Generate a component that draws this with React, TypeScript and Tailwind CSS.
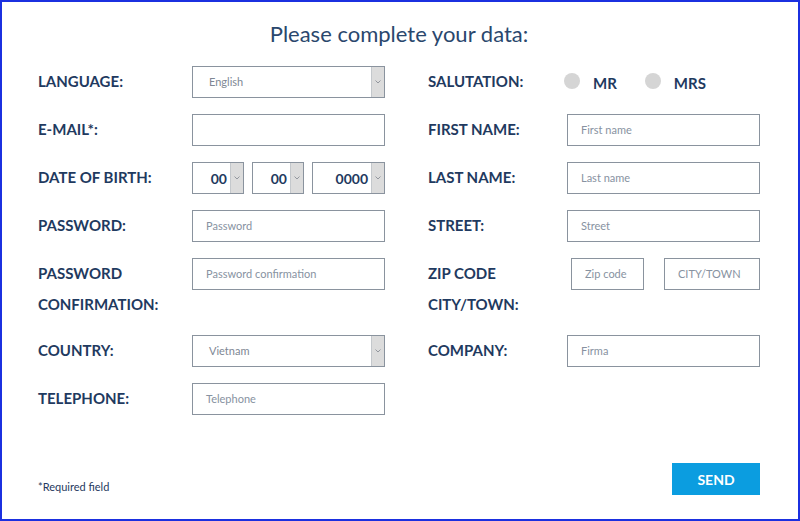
import React from 'react';

const navy = 'text-[#1f3a60]';

function Chevron() {
  return (
    <div className="flex h-full w-[13px] shrink-0 items-center justify-center bg-[#dcdcdc] border-l border-[#c4c8cc]">
      <svg width="6" height="4" viewBox="0 0 6 4" fill="none">
        <path d="M0.5 0.5 L3 3 L5.5 0.5" stroke="#8a8f96" strokeWidth="0.9" />
      </svg>
    </div>
  );
}

function Select({ value, bold, className = '' }: { value: string; bold?: boolean; className?: string }) {
  return (
    <div className={`flex h-8 items-stretch border border-[#8a939e] bg-white ${className}`}>
      {bold ? (
        <div className={`flex flex-1 items-center justify-end pr-[3px] text-[14px] font-bold ${navy}`}>{value}</div>
      ) : (
        <div className="flex flex-1 items-center pl-4 text-[11px] text-[#7e8794]">{value}</div>
      )}
      <Chevron />
    </div>
  );
}

function Input({ placeholder, className = 'w-[193px]' }: { placeholder?: string; className?: string }) {
  return (
    <div className={`flex h-8 items-center border border-[#8a939e] bg-white pl-[13px] text-[11px] text-[#8792a1] ${className}`}>
      {placeholder}
    </div>
  );
}

function Row({ label, labelW, children }: { label: React.ReactNode; labelW: string; children: React.ReactNode }) {
  return (
    <div className="flex items-start">
      <div className={`${labelW} shrink-0 text-[15px] font-bold leading-[31px] ${navy}`}>{label}</div>
      {children}
    </div>
  );
}

export default function App() {
  return (
    <div
      className="box-border flex h-[521px] w-[800px] flex-col border-2 border-[#1b30e0] bg-white pl-[36px] pr-[38px] pt-[18px]"
      style={{ fontFamily: '"Lato", "Open Sans", sans-serif' }}
    >
      <h1 className="text-center text-[22px] leading-7 font-normal text-[#2a476d]">Please complete your data:</h1>

      <div className="mt-[18px] flex gap-[43px]">
        {/* left column */}
        <div className="flex flex-col gap-4">
          <Row label="LANGUAGE:" labelW="w-[154px]">
            <Select value="English" className="w-[193px]" />
          </Row>
          <Row label="E-MAIL*:" labelW="w-[154px]">
            <Input />
          </Row>
          <Row label="DATE OF BIRTH:" labelW="w-[154px]">
            <div className="flex w-[193px] gap-2">
              <Select value="00" bold className="w-[52px]" />
              <Select value="00" bold className="w-[52px]" />
              <Select value="0000" bold className="w-[73px]" />
            </div>
          </Row>
          <Row label="PASSWORD:" labelW="w-[154px]">
            <Input placeholder="Password" />
          </Row>
          <Row
            label={
              <div className="-mb-px">
                PASSWORD
                <br />
                CONFIRMATION:
              </div>
            }
            labelW="w-[154px]"
          >
            <Input placeholder="Password confirmation" />
          </Row>
          <Row label="COUNTRY:" labelW="w-[154px]">
            <Select value="Vietnam" className="w-[193px]" />
          </Row>
          <Row label="TELEPHONE:" labelW="w-[154px]">
            <Input placeholder="Telephone" />
          </Row>
        </div>

        {/* right column */}
        <div className="flex flex-col gap-4">
          <Row label="SALUTATION:" labelW="w-[136px]">
            <div className={`flex h-8 items-start text-[15px] font-bold ${navy}`}>
              <span className="mt-[7px] h-4 w-4 rounded-full bg-[#d5d5d5]" />
              <span className="ml-[13px] mt-[7px] leading-[20px]">MR</span>
              <span className="ml-[28px] mt-[7px] h-4 w-4 rounded-full bg-[#d5d5d5]" />
              <span className="ml-[13px] mt-[7px] leading-[20px]">MRS</span>
            </div>
          </Row>
          <Row label="FIRST NAME:" labelW="w-[139px]">
            <Input placeholder="First name" />
          </Row>
          <Row label="LAST NAME:" labelW="w-[139px]">
            <Input placeholder="Last name" />
          </Row>
          <Row label="STREET:" labelW="w-[139px]">
            <Input placeholder="Street" />
          </Row>
          <Row
            label={
              <div className="-mb-px">
                ZIP CODE
                <br />
                CITY/TOWN:
              </div>
            }
            labelW="w-[139px]"
          >
            <div className="flex w-[193px] pl-1 gap-5">
              <Input placeholder="Zip code" className="w-[73px]" />
              <Input placeholder="CITY/TOWN" className="w-[96px]" />
            </div>
          </Row>
          <Row label="COMPANY:" labelW="w-[139px]">
            <Input placeholder="Firma" />
          </Row>
        </div>
      </div>

      <div className="mt-[48px] flex items-end justify-between">
        <span className={`text-[11px] ${navy}`}>*Required field</span>
        <button type="button" className="h-8 w-[88px] bg-[#0b9de0] text-[14px] font-bold text-white">
          SEND
        </button>
      </div>
    </div>
  );
}
